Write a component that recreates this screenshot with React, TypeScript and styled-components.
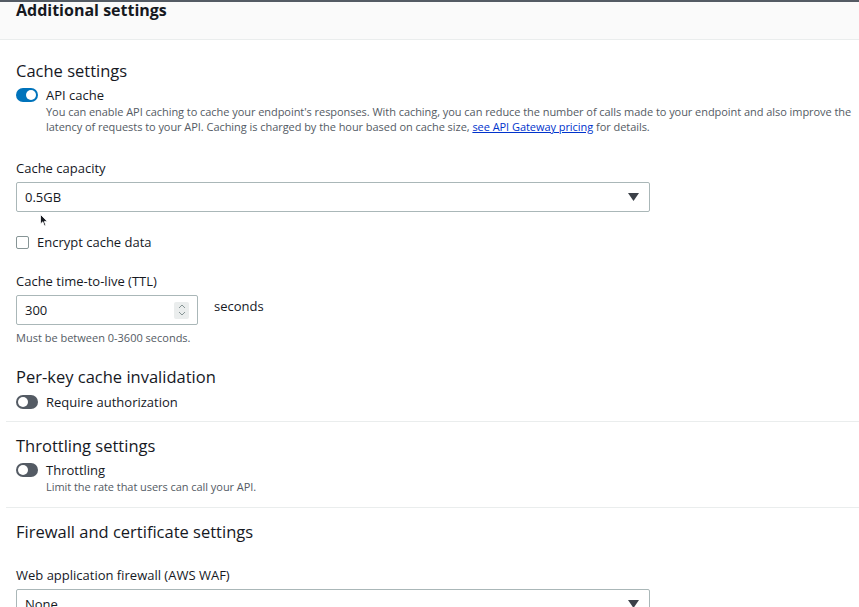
import React from "react";
import styled, { createGlobalStyle } from "styled-components";

const Global = createGlobalStyle`
  html, body { margin: 0; padding: 0; background: #fff; }
  body { font-family: "Open Sans", "Noto Sans", sans-serif; color: #16191f; overflow: hidden; }
  * { box-sizing: border-box; }
`;

const Page = styled.div`
  position: relative;
  width: 859px;
  height: 607px;
  overflow: hidden;
  border-top: 2px solid #545b64;
`;

const Header = styled.div`
  height: 40px;
  background: #fafafa;
  border-bottom: 1px solid #eaeded;
  padding: 0 16px;
`;

const Title = styled.h2`
  margin: 0;
  font-size: 16px;
  font-weight: 700;
  line-height: 20px;
  margin-top: -2px;
`;

const Body = styled.div`
  padding: 20px 0 0 0;
`;

const Section = styled.div<{ $pt?: number; $pb?: number }>`
  padding: ${(p) => p.$pt ?? 0}px 0 ${(p) => p.$pb ?? 0}px 16px;
`;

const Divider = styled.div`
  margin-left: 6px;
  border-top: 1px solid #eaeded;
`;

const H3 = styled.h3`
  margin: 0;
  font-size: 16.5px;
  font-weight: 400;
  line-height: 22px;
`;

const ToggleRow = styled.div<{ $mt?: number }>`
  display: flex;
  align-items: flex-start;
  gap: 8px;
  margin-top: ${(p) => p.$mt ?? 4}px;
`;

const Track = styled.span<{ $on?: boolean }>`
  flex: none;
  position: relative;
  width: 22px;
  height: 14px;
  border-radius: 7px;
  margin-top: 2px;
  background: ${(p) => (p.$on ? "#0073bb" : "#545b64")};
  &::after {
    content: "";
    position: absolute;
    top: 2px;
    left: ${(p) => (p.$on ? "10px" : "2px")};
    width: 10px;
    height: 10px;
    border-radius: 50%;
    background: #fff;
  }
`;

const ToggleText = styled.div`
  display: flex;
  flex-direction: column;
`;

const Label = styled.div`
  font-size: 13px;
  line-height: 18px;
  color: #16191f;
`;

const Desc = styled.div`
  font-size: 11px;
  line-height: 15px;
  letter-spacing: -0.05px;
  color: #545b64;
  a { color: #0033cc; text-decoration: underline; }
`;

const Field = styled.div<{ $mt?: number }>`
  margin-top: ${(p) => p.$mt ?? 0}px;
`;

const FieldLabel = styled.div`
  font-size: 13px;
  line-height: 18px;
  margin-bottom: 5px;
`;

const Select = styled.div`
  width: 634px;
  height: 30px;
  border: 1px solid #aab7b8;
  border-radius: 2px;
  display: flex;
  align-items: center;
  justify-content: space-between;
  padding: 0 10px 0 8px;
  font-size: 13px;
`;

const Caret = () => (
  <svg width="11" height="8" viewBox="0 0 11 8">
    <polygon points="0,0 11,0 5.5,8" fill="#3b4048" />
  </svg>
);

const CheckRow = styled.div`
  display: flex;
  align-items: center;
  gap: 8px;
  margin-top: 21px;
`;

const Box = styled.span`
  width: 13px;
  height: 13px;
  border: 1px solid #879596;
  border-radius: 2px;
  background: #fff;
`;

const InputRow = styled.div`
  display: flex;
  align-items: flex-start;
  gap: 16px;
`;

const NumberInput = styled.div`
  width: 182px;
  height: 30px;
  border: 1px solid #aab7b8;
  border-radius: 2px;
  display: flex;
  align-items: center;
  justify-content: space-between;
  padding: 0 8px 0 8px;
  font-size: 13px;
`;

const Spinner = styled.span`
  width: 15px;
  height: 17px;
  background: #eaeded;
  border-radius: 2px;
  display: flex;
  align-items: center;
  justify-content: center;
`;

const Unit = styled.div`
  font-size: 13px;
  line-height: 18px;
  margin-top: 2px;
`;

const Help = styled.div`
  font-size: 11px;
  line-height: 15px;
  color: #545b64;
  margin-top: 5px;
`;

const Cursor = styled.svg`
  position: absolute;
  left: 40px;
  top: 212px;
`;

export default function App() {
  return (
    <>
      <Global />
      <Page>
        <Header>
          <Title>Additional settings</Title>
        </Header>
        <Body>
          <Section>
            <H3>Cache settings</H3>
            <ToggleRow>
              <Track $on />
              <ToggleText>
                <Label>API cache</Label>
                <Desc>
                  You can enable API caching to cache your endpoint's responses. With caching, you can reduce the number of calls made to your endpoint and also improve the
                  latency of requests to your API. Caching is charged by the hour based on cache size, <a>see API Gateway pricing</a> for details.
                </Desc>
              </ToggleText>
            </ToggleRow>
            <Field $mt={25}>
              <FieldLabel>Cache capacity</FieldLabel>
              <Select>
                <span>0.5GB</span>
                <Caret />
              </Select>
            </Field>
            <CheckRow>
              <Box />
              <Label>Encrypt cache data</Label>
            </CheckRow>
            <Field $mt={21}>
              <FieldLabel>Cache time-to-live (TTL)</FieldLabel>
              <InputRow>
                <NumberInput>
                  <span>300</span>
                  <Spinner>
                    <svg width="8" height="12" viewBox="0 0 8 12">
                      <polyline points="1,4 4,1 7,4" fill="none" stroke="#879596" strokeWidth="1" />
                      <polyline points="1,8 4,11 7,8" fill="none" stroke="#879596" strokeWidth="1" />
                    </svg>
                  </Spinner>
                </NumberInput>
                <Unit>seconds</Unit>
              </InputRow>
              <Help>Must be between 0-3600 seconds.</Help>
            </Field>
          </Section>
          <Section $pt={21} $pb={10}>
            <H3>Per-key cache invalidation</H3>
            <ToggleRow $mt={5}>
              <Track />
              <ToggleText>
                <Label>Require authorization</Label>
              </ToggleText>
            </ToggleRow>
          </Section>
          <Divider />
          <Section $pt={13} $pb={13}>
            <H3>Throttling settings</H3>
            <ToggleRow>
              <Track />
              <ToggleText>
                <Label>Throttling</Label>
                <Desc>Limit the rate that users can call your API.</Desc>
              </ToggleText>
            </ToggleRow>
          </Section>
          <Divider />
          <Section $pt={13}>
            <H3>Firewall and certificate settings</H3>
            <Field $mt={23}>
              <FieldLabel>Web application firewall (AWS WAF)</FieldLabel>
              <Select>
                <span>None</span>
                <Caret />
              </Select>
            </Field>
          </Section>
        </Body>
        <Cursor width="8" height="13" viewBox="0 0 8 13">
          <path d="M0.5 0.5 L0.5 10 L2.8 7.8 L4.4 11.8 L5.8 11.2 L4.3 7.4 L7.3 7.4 Z" fill="#16191f" stroke="#fff" strokeWidth="0.8" />
        </Cursor>
      </Page>
    </>
  );
}
